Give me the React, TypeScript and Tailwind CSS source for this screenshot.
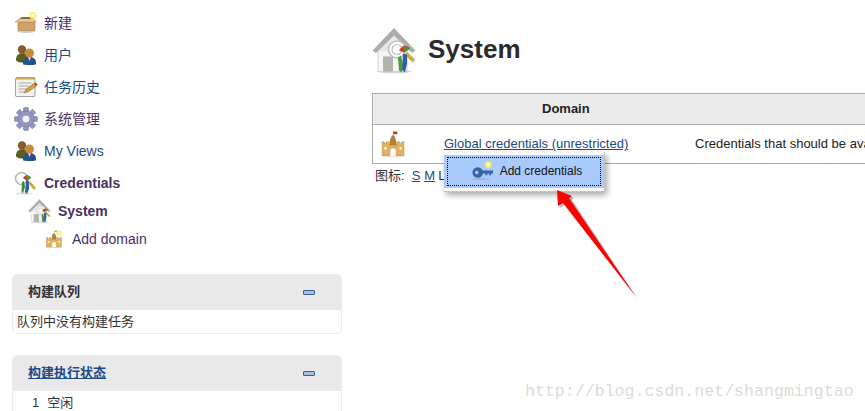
import type { ReactNode } from 'react';

const FONT = "font-['Liberation_Sans','Noto_Sans_CJK_SC',sans-serif]";

function NewIcon() {
  return (
    <svg viewBox="0 0 24 24" className="w-6 h-6">
      <ellipse cx="12" cy="20.500" rx="9" ry="1.500" fill="#ccc" />
      <path d="M4 11h17v8.500H4z" fill="#cfa26a" stroke="#a87a45" strokeWidth="0.600" />
      <path d="M1 11l5-4h13l3 4H1z" fill="#e8c692" stroke="#b88d55" strokeWidth="0.600" />
      <path d="M6 8l2-2h8l2 2z" fill="#8d6a3e" />
      <circle cx="19" cy="4.500" r="3.600" fill="#fbec5d" />
      <circle cx="19" cy="4.500" r="1.800" fill="#fffde0" />
    </svg>
  );
}

function UsersIcon() {
  return (
    <svg viewBox="0 0 24 24" className="w-6 h-6">
      <path d="M2 17c0-5 3-7 7-7s6 3 6 7-13 3-13 0z" fill="#5a6020" />
      <circle cx="8" cy="6.500" r="4.200" fill="#8a5a2a" />
      <path d="M9 21c0-5 2-7 6.500-7s6.500 2 6.500 7c0 1.500-13 1.500-13 0z" fill="#24508c" />
      <path d="M14 14h3l-1.500 4z" fill="#e8e8e8" />
      <circle cx="15.500" cy="10" r="4.500" fill="#c98a3c" />
    </svg>
  );
}

function NotepadIcon() {
  return (
    <svg viewBox="0 0 24 24" className="w-6 h-6">
      <rect x="1.500" y="3" width="19.500" height="18.500" rx="1" fill="#f4f4ee" stroke="#8c8c84" strokeWidth="0.800" />
      <rect x="2" y="2" width="19" height="2.500" fill="#c9a94e" />
      <path d="M4.500 8h13M4.500 11h10M4.500 14h7M4.500 17h6" stroke="#a4a4a4" strokeWidth="1" />
      <path d="M10 18l2-4 8-5.500 2.500 2.500-8 5.500z" fill="#d99a45" stroke="#8a5a20" strokeWidth="0.500" />
      <path d="M20 8.500l1.500-1 2 2-1 1.500z" fill="#cc2b2b" />
    </svg>
  );
}

function GearIcon() {
  return (
    <svg viewBox="0 0 24 24" className="w-6 h-6">
      <g fill="#9297c2" stroke="#6a6f9a" strokeWidth="0.500">
        {[0, 45, 90, 135, 180, 225, 270, 315].map((a) => (
          <rect key={a} x="9.500" y="0.500" width="5" height="6" rx="1" transform={`rotate(${a} 12 12)`} />
        ))}
        <circle cx="12" cy="12" r="8" />
      </g>
      <circle cx="12" cy="12" r="4" fill="#f4f4f8" stroke="#6a6f9a" strokeWidth="0.600" />
    </svg>
  );
}

function CredentialsIcon() {
  return (
    <svg viewBox="0 0 24 24" className="w-6 h-6">
      <ellipse cx="10" cy="22.500" rx="9" ry="1.200" fill="#ddd" />
      <circle cx="7.500" cy="7.500" r="6" fill="none" stroke="#b5b5b5" strokeWidth="1.600" />
      <path d="M9 7c3-4 6-3 8 0l-4 3z" fill="#d33" />
      <path d="M12 5c2-1 4 0 5 2l-3 2z" fill="#4a9a3a" />
      <path d="M16 10l6 7-2 2-5-6z" fill="#c8a03c" />
      <path d="M8 11l2-1 1 6-2 6-1.500-1z" fill="#3f8a3a" />
      <path d="M12 9l3 1 0 8-2 5-2-2z" fill="#2a62a8" />
    </svg>
  );
}

function HouseKeysIcon({ className }: { className: string }) {
  return (
    <svg viewBox="0 0 46 46" className={className}>
      <ellipse cx="22" cy="44" rx="17" ry="1.800" fill="#d5d5d5" />
      <path d="M6 20h29v24H6z" fill="#f6f6f6" stroke="#d0d0d0" />
      <path d="M1 23L22 1l21 22-3 2L22 8 4 25z" fill="#adadad" stroke="#9b9b9b" strokeWidth="0.600" />
      <path d="M22 8l-16 16h32z" fill="#e6e6e6" />
      <rect x="11" y="29" width="10" height="15" fill="#b4b4ae" />
      <circle cx="25" cy="22" r="8.500" fill="#fff" stroke="#c0c0c0" strokeWidth="1.600" />
      <circle cx="25" cy="22" r="5" fill="none" stroke="#c0c0c0" strokeWidth="1.200" />
      <path d="M27 23c3-6 8-6 11-2l-6 4z" fill="#d33" />
      <path d="M30 20c3-2 6-1 8 1l-4 3z" fill="#3f9a3a" />
      <path d="M35 24l8 8-2 3-8-7z" fill="#d0a83c" />
      <path d="M26 30l3-2 2 9-1 8-3-2z" fill="#4a9a3a" />
      <path d="M31 26l4 1v9l-2 9-3-3z" fill="#2a62a8" />
    </svg>
  );
}

function CastleIcon({ className, badge }: { className: string; badge?: boolean }) {
  return (
    <svg viewBox="0 0 24 24" className={className}>
      <path d="M2 10h2v1.500h2V10h2v3h8v-3h2v1.500h2V10h2v13H2z" fill="#e0b264" stroke="#b5853f" strokeWidth="0.500" />
      <path d="M8.500 13C9 8 10 5 12 3.500 14 5 15 8 15.500 13z" fill="#b57f3a" />
      <path d="M12 0.500h4v2.500h-4z" fill={badge ? '#e0b264' : '#c0392b'} />
      <path d="M9.500 23v-4.500a2.500 2.500 0 015 0V23z" fill="#fff" />
      <path d="M4 15h2v2H4zM18 15h2v2h-2z" fill="#fff" />
      {badge && <circle cx="19" cy="4" r="3.500" fill="#fbec5d" />}
      {badge && <circle cx="19" cy="4" r="1.700" fill="#fffde0" />}
    </svg>
  );
}

function KeyIcon() {
  return (
    <svg viewBox="0 0 24 24" className="w-[23px] h-[23px]">
      <ellipse cx="10" cy="20" rx="10" ry="1" fill="#9db3d6" />
      <circle cx="7" cy="13" r="5.500" fill="#3a64a0" />
      <circle cx="6" cy="13" r="1.800" fill="#a9c8fb" />
      <path d="M11 11h12v3h-2v2h-2v-2h-2v2h-2v-2h-4z" fill="#3a64a0" />
      <circle cx="18" cy="5" r="3.600" fill="#fbec5d" />
      <circle cx="18" cy="5" r="1.800" fill="#fffde0" />
    </svg>
  );
}

function CollapseButton() {
  return <span className="block w-3 h-[5px] bg-[#a9bfdc] border border-[#3a5f95] rounded-[1px]" />;
}

function NavItem({
  icon,
  label,
  className = '',
  textClass = 'text-[#204a87]',
}: {
  icon: ReactNode;
  label: string;
  className?: string;
  textClass?: string;
}) {
  return (
    <div className={`flex items-center gap-[6px] ${className}`}>
      {icon}
      <span className={`text-[14px] leading-none ${textClass}`}>{label}</span>
    </div>
  );
}

function Panel({
  title,
  link,
  className = '',
  children,
}: {
  title: string;
  link?: boolean;
  className?: string;
  children: ReactNode;
}) {
  return (
    <div className={`border border-[#ececec] rounded-[5px] overflow-hidden ${className}`}>
      <div className="h-[35px] bg-[#e9e9e9] flex items-center justify-between pl-[15px] pr-[26px]">
        <span
          className={`text-[13px] font-bold pb-[1px] ${link ? 'text-[#204a87] underline' : 'text-[#333]'}`}
        >
          {title}
        </span>
        <CollapseButton />
      </div>
      {children}
    </div>
  );
}

export default function App() {
  const visited = 'text-[#4b2f5f]';

  return (
    <div className={`relative w-[865px] h-[411px] overflow-hidden bg-white flex ${FONT}`}>
      {/* Sidebar */}
      <aside className="w-[372px] shrink-0 pl-[12px] pr-[30px] pt-[11px]">
        <div className="flex flex-col gap-[8px] pl-[2px]">
          <NavItem icon={<NewIcon />} label="新建" textClass={visited} />
          <NavItem icon={<UsersIcon />} label="用户" />
          <NavItem icon={<NotepadIcon />} label="任务历史" />
          <NavItem icon={<GearIcon />} label="系统管理" textClass={visited} />
          <NavItem icon={<UsersIcon />} label="My Views" />
          <NavItem icon={<CredentialsIcon />} label="Credentials" textClass={`${visited} font-bold`} />
        </div>
        <NavItem
          icon={<HouseKeysIcon className="w-6 h-6" />}
          label="System"
          className="pl-[16px] mt-[4px] gap-[5px]"
          textClass={`${visited} font-bold`}
        />
        <NavItem
          icon={<CastleIcon className="w-[18px] h-[20px]" badge />}
          label="Add domain"
          className="pl-[33px] mt-[6px] gap-[9px]"
          textClass={visited}
        />

        <Panel title="构建队列" className="mt-[25px]">
          <div className="h-[23px] pl-[4px] text-[13px] leading-[24px] text-[#333]">队列中没有构建任务</div>
        </Panel>

        <Panel title="构建执行状态" link className="mt-[21px]">
          <div className="h-[24px] pl-[19px] text-[13px] leading-[24px] text-[#333]">
            1<span className="ml-[8px]">空闲</span>
          </div>
        </Panel>
      </aside>

      {/* Main */}
      <main className="flex-1 min-w-0 pt-[27px]">
        <div className="flex items-center gap-[10px] h-[47px]">
          <HouseKeysIcon className="w-[46px] h-[47px]" />
          <h1 className="text-[26px] font-bold text-[#2b2b2b] leading-none pb-[4px]">System</h1>
        </div>
        <div className="mt-[19px] w-[600px] border border-[#aaa]">
          <div className="h-[31px] bg-[#ebebeb] border-b border-[#aaa] pl-[169px] flex items-center text-[13px] font-bold text-[#222]">
            Domain
          </div>
          <div className="h-[38px] flex items-center text-[13px]">
            <span className="w-[71px] pl-[7px] shrink-0">
              <CastleIcon className="w-[26px] h-[26px]" />
            </span>
            <span className="w-[251px] shrink-0 text-[#204a87] underline">Global credentials (unrestricted)</span>
            <span className="text-[#222] whitespace-nowrap">Credentials that should be available irrespective of domain</span>
          </div>
        </div>
        <div className="mt-[3px] pl-[3px] text-[13px] leading-[18px] text-[#333] flex">
          <span>图标:</span>
          <span className="ml-[7px] text-[#204a87] underline">S</span>
          <span className="ml-[4px] text-[#204a87] underline">M</span>
          <span className="ml-[3px]">L</span>
        </div>
      </main>

      {/* Context menu */}
      <div className="absolute left-[444px] top-[152px] w-[161px] h-[40px] bg-white border-r border-b border-[#c4c4c4] shadow-[2px_3px_6px_rgba(0,0,0,0.35)] pt-[3px]">
        <div className="h-[33px] bg-[#a9cbfb] px-[3px] py-[2px]">
          <div className="h-[29px] border border-dotted border-black flex items-center justify-center gap-[6px] pl-[5px] pb-[1px] text-[12px] text-[#111]">
            <KeyIcon />
            <span>Add credentials</span>
          </div>
        </div>
      </div>

      {/* Annotation arrow */}
      <svg className="absolute left-[550px] top-[185px] w-[95px] h-[120px]" viewBox="550 185 95 120">
        <polygon points="559,192 574,198 572,200 638,299 565,205 560,208" fill="#777" opacity="0.5" />
        <polygon points="557,190 572,196 569,198 636,297 563,203 558,206" fill="#fe0000" />
      </svg>

      {/* Watermark */}
      <span className="absolute left-[525px] top-[382px] font-['Liberation_Mono',monospace] text-[16.600px] leading-5 text-[#dcdcd6] whitespace-nowrap">
        http://blog.csdn.net/shangmingtao
      </span>
    </div>
  );
}
